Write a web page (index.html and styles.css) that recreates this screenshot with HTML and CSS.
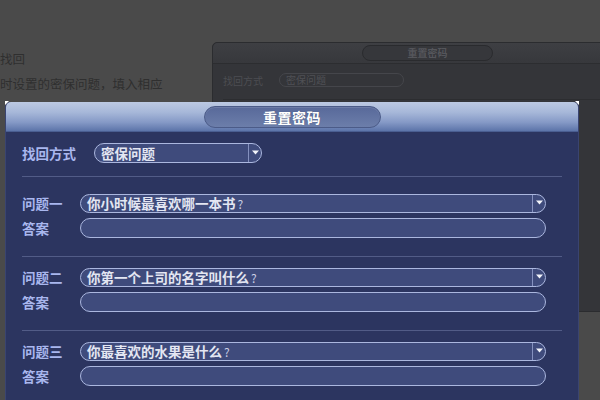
FILE: index.html
```html
<!DOCTYPE html>
<html lang="zh-CN">
<head>
<meta charset="utf-8">
<title>重置密码</title>
<link rel="stylesheet" href="styles.css">
</head>
<body>
<div class="page">
  <div class="bg-text">
    <p>找回</p>
    <p>时设置的密保问题，填入相应</p>
  </div>

  <div class="bg-dialog">
    <div class="bg-head"><span class="bg-pill">重置密码</span></div>
    <div class="bg-body">
      <div class="bg-row">
        <span class="bg-label">找回方式</span>
        <span class="bg-select">密保问题</span>
      </div>
      <div class="bg-sep"></div>
    </div>
  </div>

  <div class="dialog">
    <span class="corner corner-l"></span>
    <span class="corner corner-r"></span>
    <div class="head"><div class="title">重置密码</div></div>
    <div class="body">
      <div class="row">
        <span class="label label-mode">找回方式</span>
        <div class="select select-mode">
          <span class="value">密保问题</span>
          <span class="drop"><svg width="7" height="5" viewBox="0 0 7 5"><path d="M0 0.5 H7 L3.5 4.5 Z" fill="#f2f4fa"/></svg></span>
        </div>
      </div>
      <div class="sep"></div>

      <div class="qa first">
        <div class="row">
          <span class="label label-q">问题一</span>
          <div class="select">
            <span class="value">你小时候最喜欢哪一本书<span class="qm">?</span></span>
            <span class="drop"><svg width="7" height="5" viewBox="0 0 7 5"><path d="M0 0.5 H7 L3.5 4.5 Z" fill="#f2f4fa"/></svg></span>
          </div>
        </div>
        <div class="row">
          <span class="label label-q">答案</span>
          <div class="input"></div>
        </div>
      </div>
      <div class="sep"></div>

      <div class="qa">
        <div class="row">
          <span class="label label-q">问题二</span>
          <div class="select">
            <span class="value">你第一个上司的名字叫什么<span class="qm">?</span></span>
            <span class="drop"><svg width="7" height="5" viewBox="0 0 7 5"><path d="M0 0.5 H7 L3.5 4.5 Z" fill="#f2f4fa"/></svg></span>
          </div>
        </div>
        <div class="row">
          <span class="label label-q">答案</span>
          <div class="input"></div>
        </div>
      </div>
      <div class="sep"></div>

      <div class="qa">
        <div class="row">
          <span class="label label-q">问题三</span>
          <div class="select">
            <span class="value">你最喜欢的水果是什么<span class="qm">?</span></span>
            <span class="drop"><svg width="7" height="5" viewBox="0 0 7 5"><path d="M0 0.5 H7 L3.5 4.5 Z" fill="#f2f4fa"/></svg></span>
          </div>
        </div>
        <div class="row">
          <span class="label label-q">答案</span>
          <div class="input"></div>
        </div>
      </div>
    </div>
  </div>
</div>
</body>
</html>
```

FILE: styles.css
```css
* { box-sizing: border-box; margin: 0; padding: 0; }
html, body { width: 600px; height: 400px; overflow: hidden; }
body {
  background: #4a4a4a;
  font-family: "Noto Sans CJK SC", "Noto Sans", sans-serif;
}
.page { position: relative; width: 600px; height: 400px; overflow: hidden; }

/* background page text */
.bg-text { padding-top: 46px; color: #2f2f2f; font-size: 12.5px; line-height: 25px; }

/* background (dimmed) dialog */
.bg-dialog {
  position: absolute; left: 212px; top: 42px;
  width: 420px; height: 270px;
  background: #343539;
  border: 1px solid #2b2c2f;
  border-radius: 5px 0 0 0;
}
.bg-head {
  height: 21px;
  background: linear-gradient(#3e3f43, #37383c);
  border-bottom: 1px solid #2c2d30;
  border-radius: 5px 0 0 0;
  padding: 2px 0 0 149px;
}
.bg-pill {
  display: block; width: 131px; height: 16px;
  border: 1px solid #2a2b2e; border-radius: 8px;
  background: #36373b;
  color: #55565b; font-size: 10px; font-weight: bold;
  line-height: 14px; text-align: center;
}
.bg-body { padding: 9px 0 0 10px; }
.bg-row { display: flex; align-items: center; height: 14px; }
.bg-label { width: 56px; font-size: 10px; color: #4c4d52; }
.bg-select {
  width: 125px; height: 14px;
  border: 1px solid #45464b; border-radius: 7px;
  font-size: 10px; line-height: 12px; color: #505156; padding-left: 6px;
}
.bg-sep { height: 1px; background: #2c2d30; margin-top: 12px; }

/* main dialog */
.dialog {
  position: absolute; left: 5px; top: 102px;
  width: 574px; height: 320px;
  background: #2c3560;
  border-left: 1px solid #3a4470;
  border-right: 1px solid #3a4470;
  border-radius: 5px 5px 0 0;
}
.corner {
  position: absolute; top: -1px; width: 4px; height: 4px; background: #ffffff;
}
.corner-l { left: -1px; clip-path: polygon(0 0, 100% 0, 0 100%); }
.corner-r { right: -1px; clip-path: polygon(0 0, 100% 0, 100% 100%); }

.head {
  height: 30px;
  background: linear-gradient(#bcc9e2 0%, #a7b8d9 35%, #8599c6 70%, #5c74a9 100%);
  border-bottom: 1px solid #4a5e91;
  border-radius: 5px 5px 0 0;
  padding-top: 4px;
  display: flex; justify-content: center; align-items: flex-start;
}
.title {
  width: 177px; height: 22px;
  border-radius: 11px;
  background: linear-gradient(#58699a, #6c7eaa);
  border: 1px solid #4b5b88;
  box-shadow: inset 0 1px 0 rgba(255,255,255,0.12);
  color: #ffffff; font-size: 14px; font-weight: bold;
  line-height: 20px; text-align: center; letter-spacing: 0.5px;
  text-shadow: 0 0 1px rgba(0,0,0,0.3);
}

.body { padding: 11px 16px 0 16px; }
.row { display: flex; align-items: center; margin-right: 16px; }
.label { color: #a9b7ee; font-size: 13.5px; font-weight: bold; flex: none; }
.label-mode { width: 72px; }
.label-q { width: 58px; }

.select {
  flex: 1; height: 19px;
  border: 1.5px solid #abb7df; border-radius: 10px;
  background: #3f4b7c;
  display: flex; align-items: center;
  overflow: hidden;
}
.select-mode { flex: none; width: 168px; height: 20px; }
.value {
  flex: 1; padding-left: 6px;
  color: #e3e6f2; font-size: 13.5px; font-weight: bold;
  white-space: nowrap; line-height: 16px;
}
.qm { font-weight: normal; font-size: 12px; margin-left: 2px; color: #c9cfe4; }
.drop {
  flex: none; width: 13px; height: 100%;
  border-left: 1px solid #8591bf;
  display: flex; align-items: center; justify-content: center;
  padding-bottom: 2px;
}
.input {
  flex: 1; height: 20px;
  border: 1.5px solid #abb7df; border-radius: 10px;
  background: #3f4b7c;
}

.sep { height: 1px; background: #525c87; margin-top: 13px; }
.qa { display: flex; flex-direction: column; gap: 5px; margin-top: 10px; }
.qa.first { margin-top: 16px; }
.qa + .sep { margin-top: 18px; }
```
